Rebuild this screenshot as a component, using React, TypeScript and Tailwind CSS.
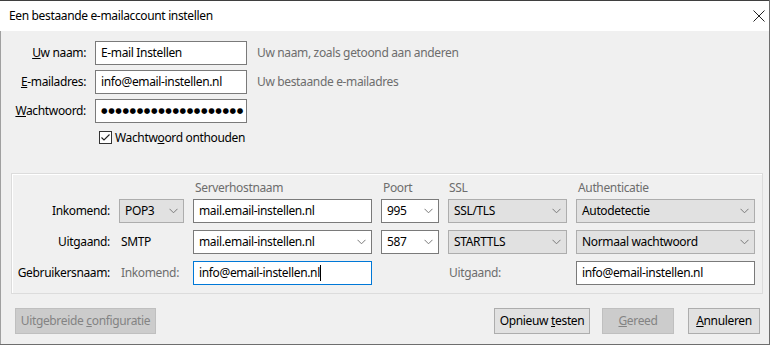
import React from 'react';

function Chevron() {
  return (
    <svg width="9" height="6" viewBox="0 0 9 6" className="shrink-0">
      <polyline points="0.5,0.8 4.5,4.8 8.5,0.8" fill="none" stroke="#7a7a7a" strokeWidth="1" />
    </svg>
  );
}

function Select({ value, gray }: { value: string; gray?: boolean }) {
  return (
    <div
      className={`flex items-center justify-between h-[24px] pl-[5px] pr-[5px] border ${
        gray ? 'bg-[#e1e1e1] border-[#adadad]' : 'bg-white border-[#7a7a7a]'
      }`}
    >
      <span className="whitespace-nowrap">{value}</span>
      <Chevron />
    </div>
  );
}

function TextBox({ value, focused, cursor }: { value: React.ReactNode; focused?: boolean; cursor?: boolean }) {
  return (
    <div
      className={`flex items-center h-[24px] pl-[5px] bg-white border whitespace-nowrap overflow-hidden ${
        focused ? 'border-[#0078d7]' : 'border-[#7a7a7a]'
      }`}
    >
      {value}
      {cursor && <span className="w-px h-[16px] bg-black" />}
    </div>
  );
}

function Button({ children, disabled, className = '' }: { children: React.ReactNode; disabled?: boolean; className?: string }) {
  return (
    <div
      className={`flex items-center justify-center h-[26px] border ${
        disabled ? 'bg-[#cccccc] border-[#bfbfbf] text-[#838383]' : 'bg-[#e1e1e1] border-[#adadad] text-black'
      } ${className}`}
    >
      {children}
    </div>
  );
}

const cols = 'grid grid-cols-[98px_65px_179px_58px_119px_179px] gap-x-[9px]';

export default function App() {
  return (
    <div className="w-[775px] h-[347px] bg-white font-['Noto_Sans',sans-serif] text-[12px] tracking-[-0.35px] text-black">
      <div className="w-[770px] h-[345px] flex flex-col border-r border-b border-[#6e6e6e]">
        {/* Title bar */}
        <div className="h-[31px] shrink-0 bg-white border-t border-[#3f3f3f] flex items-center justify-between pl-[9px] pr-[4px]">
          <span>Een bestaande e-mailaccount instellen</span>
          <svg width="12" height="12" viewBox="0 0 12 12">
            <path d="M0.5 0.5 L11.5 11.5 M11.5 0.5 L0.5 11.5" stroke="#222" strokeWidth="1" />
          </svg>
        </div>

        {/* Body */}
        <div className="flex-1 bg-[#f0f0f0] border-l border-[#a0a0a0] pt-[10px]">
          <div className="flex flex-col gap-[5px]">
            <div className="flex items-center h-[24px]">
              <span className="w-[85px] text-right"><u>U</u>w naam:</span>
              <div className="ml-[9px] w-[152px]"><TextBox value="E-mail Instellen" /></div>
              <span className="ml-[10px] text-[#6d6d6d]">Uw naam, zoals getoond aan anderen</span>
            </div>
            <div className="flex items-center h-[24px]">
              <span className="w-[85px] text-right"><u>E</u>-mailadres:</span>
              <div className="ml-[9px] w-[152px]"><TextBox value="info@email-instellen.nl" /></div>
              <span className="ml-[10px] text-[#6d6d6d]">Uw bestaande e-mailadres</span>
            </div>
            <div className="flex items-center h-[24px]">
              <span className="w-[85px] text-right"><u>W</u>achtwoord:</span>
              <div className="ml-[9px] w-[152px]">
                <TextBox value={<span className="font-['DejaVu_Sans',sans-serif] text-[7.5px] tracking-[0.6px]">{'●'.repeat(20)}</span>} />
              </div>
            </div>
          </div>

          <div className="flex items-center h-[13px] mt-[8px] pl-[98px]">
            <div className="w-[13px] h-[13px] bg-white border border-[#333] flex items-center justify-center">
              <svg width="11" height="11" viewBox="0 0 11 11">
                <polyline points="1.5,5.5 4,8 9.5,2.5" fill="none" stroke="#222" strokeWidth="1.1" />
              </svg>
            </div>
            <span className="ml-[3px]">Wachtw<u>o</u>ord onthouden</span>
          </div>

          {/* Server settings group */}
          <div className="ml-[10px] mt-[29px] w-[752px] h-[121px] border border-[#dcdcdc] shadow-[inset_1px_1px_0_#fff] pt-[5px]">
            <div className={`${cols} h-[16px] items-center text-[#6d6d6d] mb-[4px]`}>
              <span />
              <span />
              <span className="pl-[2px]">Serverhostnaam</span>
              <span className="pl-[2px]">Poort</span>
              <span className="pl-[1px]">SSL</span>
              <span className="pl-[2px]">Authenticatie</span>
            </div>
            <div className="flex flex-col gap-[7px]">
              <div className={`${cols} items-center`}>
                <span className="text-right">Inkomend:</span>
                <Select value="POP3" gray />
                <TextBox value="mail.email-instellen.nl" />
                <Select value="995" />
                <Select value="SSL/TLS" gray />
                <Select value="Autodetectie" gray />
              </div>
              <div className={`${cols} items-center`}>
                <span className="text-right">Uitgaand:</span>
                <span className="pl-[2px]">SMTP</span>
                <Select value="mail.email-instellen.nl" />
                <Select value="587" />
                <Select value="STARTTLS" gray />
                <Select value="Normaal wachtwoord" gray />
              </div>
              <div className={`${cols} items-center`}>
                <span className="text-right">Gebruikersnaam:</span>
                <span className="pl-[2px] text-[#6d6d6d]">Inkomend:</span>
                <TextBox value="info@email-instellen.nl" focused cursor />
                <span />
                <span className="pl-[1px] text-[#6d6d6d]">Uitgaand:</span>
                <TextBox value="info@email-instellen.nl" />
              </div>
            </div>
          </div>

          {/* Buttons */}
          <div className="flex items-center mt-[14px] pl-[14px] pr-[9px]">
            <Button disabled className="w-[141px]">Uitgebreide <u className="ml-[3px]">c</u>onfiguratie</Button>
            <div className="flex-1" />
            <Button className="w-[96px]">Opnieuw <u className="ml-[3px]">t</u>esten</Button>
            <Button disabled className="w-[72px] ml-[12px]"><u>G</u>ereed</Button>
            <Button className="w-[72px] ml-[14px]"><u>A</u>nnuleren</Button>
          </div>
        </div>
      </div>
    </div>
  );
}
